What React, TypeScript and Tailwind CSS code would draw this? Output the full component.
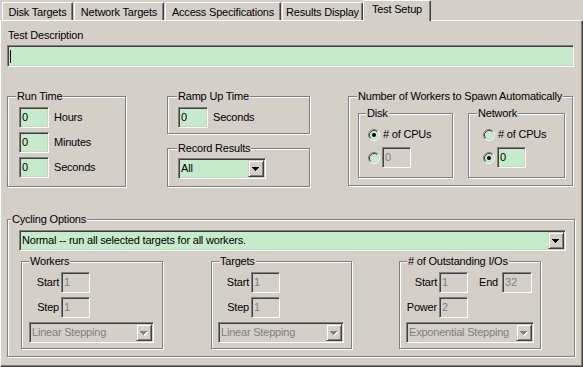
import React from 'react';

type P = { className?: string; children?: React.ReactNode };

function Sunken({ className = '', children }: P) {
  return (
    <div
      className={`flex items-center border border-t-[#808080] border-l-[#808080] border-b-white border-r-white shadow-[inset_1px_1px_0_#404040,inset_-1px_-1px_0_#d4d0c8] ${className}`}
    >
      {children}
    </div>
  );
}

function Field({ value, w, disabled }: { value: string; w: string; disabled?: boolean }) {
  return (
    <Sunken
      className={`h-[21px] shrink-0 pl-[2px] ${w} ${disabled ? 'bg-[#d4d0c8] text-[#808080]' : 'bg-[#c5ebca] text-black'}`}
    >
      {value}
    </Sunken>
  );
}

function Arrow({ disabled }: { disabled?: boolean }) {
  const c = disabled ? '#808080' : '#000000';
  return (
    <svg width="8" height="5" viewBox="0 0 8 5" className="block">
      {disabled && (
        <g fill="#ffffff">
          <rect x="1" y="1" width="7" height="1" />
          <rect x="2" y="2" width="5" height="1" />
          <rect x="3" y="3" width="3" height="1" />
          <rect x="4" y="4" width="1" height="1" />
        </g>
      )}
      <g fill={c}>
        <rect x="0" y="0" width="7" height="1" />
        <rect x="1" y="1" width="5" height="1" />
        <rect x="2" y="2" width="3" height="1" />
        <rect x="3" y="3" width="1" height="1" />
      </g>
    </svg>
  );
}

function Combo({ text, w, disabled }: { text: string; w: string; disabled?: boolean }) {
  return (
    <Sunken
      className={`h-[21px] shrink-0 pl-[2px] pr-[1px] ${w} ${disabled ? 'bg-[#d4d0c8] text-[#808080]' : 'bg-[#c5ebca] text-black'}`}
    >
      <span className="min-w-0 flex-1 truncate whitespace-nowrap">{text}</span>
      <div className="flex h-[17px] w-[16px] shrink-0 items-center justify-center border border-t-[#d4d0c8] border-l-[#d4d0c8] border-b-[#404040] border-r-[#404040] bg-[#d4d0c8] pt-[2px] shadow-[inset_1px_1px_0_#ffffff,inset_-1px_-1px_0_#808080]">
        <Arrow disabled={disabled} />
      </div>
    </Sunken>
  );
}

function Radio({ checked }: { checked?: boolean }) {
  return (
    <svg width="12" height="12" viewBox="0 0 12 12" className="block shrink-0">
      <circle cx="6" cy="6" r="4.5" fill="#c5ebca" />
      <path d="M2.11 9.89A5.5 5.5 0 0 1 9.89 2.11" stroke="#808080" fill="none" />
      <path d="M9.89 2.11A5.5 5.5 0 0 1 2.11 9.89" stroke="#ffffff" fill="none" />
      <path d="M2.82 9.18A4.5 4.5 0 0 1 9.18 2.82" stroke="#404040" fill="none" />
      <path d="M9.18 2.82A4.5 4.5 0 0 1 2.82 9.18" stroke="#d4d0c8" fill="none" />
      {checked && <circle cx="6" cy="6" r="2" fill="#000000" />}
    </svg>
  );
}

function Group({ title, className = '', tl = 'left-[8px]', children }: P & { title: string; tl?: string }) {
  return (
    <div
      className={`relative shrink-0 border border-[#808080] shadow-[inset_1px_1px_0_#ffffff,1px_1px_0_#ffffff] ${className}`}
    >
      <span className={`absolute top-[-7px] ${tl} whitespace-nowrap bg-[#d4d0c8] px-[1px] leading-[13px]`}>
        {title}
      </span>
      {children}
    </div>
  );
}

function Tab({ children, className = '' }: P) {
  return (
    <div
      className={`flex h-[18px] shrink-0 justify-center whitespace-nowrap rounded-t-[2px] border-t border-l border-r border-t-white border-l-white border-r-[#404040] pt-[3px] shadow-[inset_-1px_0_0_#808080] ${className}`}
    >
      {children}
    </div>
  );
}

function Label({ children }: P) {
  return <span className="w-[39px] shrink-0 pr-[2px] text-right">{children}</span>;
}

export default function App() {
  return (
    <div className="h-[367px] w-[583px] overflow-hidden bg-[#d4d0c8] font-['Liberation_Sans',Arial,sans-serif] text-[11px] leading-[13px] tracking-[-0.2px] text-black">
      {/* tab strip */}
      <div className="flex h-[20px] items-end pl-[2px]">
        <Tab className="w-[71px]">Disk Targets</Tab>
        <Tab className="ml-[1px] w-[90px]">Network Targets</Tab>
        <Tab className="ml-[1px] w-[116px]">Access Specifications</Tab>
        <Tab className="ml-[1px] w-[81px]">Results Display</Tab>
        <div className="relative z-10 mb-[-1px] flex h-[21px] w-[68px] shrink-0 justify-center whitespace-nowrap rounded-t-[2px] border-t border-l border-r border-t-white border-l-white border-r-[#404040] bg-[#d4d0c8] pt-[2px] shadow-[inset_-1px_0_0_#808080]">
          Test Setup
        </div>
      </div>

      {/* panel */}
      <div className="h-[347px] border-t border-l border-r border-b border-t-white border-l-white border-r-[#404040] border-b-[#404040] pl-[6px] pt-[8px] shadow-[inset_-1px_-1px_0_#808080]">
        <div className="pl-[1px]">Test Description</div>
        <Sunken className="mt-[3px] h-[22px] w-[567px] bg-[#c5ebca] pl-[2px]">
          <div className="h-[13px] w-[1px] bg-black" />
        </Sunken>

        <div className="mt-[29px] flex items-start">
          <Group title="Run Time" className="h-[91px] w-[119px]">
            <div className="flex flex-col gap-[4px] pl-[11px] pt-[10px]">
              <div className="flex items-center">
                <Field value="0" w="w-[30px]" />
                <span className="ml-[5px]">Hours</span>
              </div>
              <div className="flex items-center">
                <Field value="0" w="w-[30px]" />
                <span className="ml-[5px]">Minutes</span>
              </div>
              <div className="flex items-center">
                <Field value="0" w="w-[30px]" />
                <span className="ml-[5px]">Seconds</span>
              </div>
            </div>
          </Group>

          <div className="ml-[41px] flex flex-col">
            <Group title="Ramp Up Time" tl="left-[9px]" className="h-[38px] w-[143px]">
              <div className="flex items-center pl-[10px] pt-[10px]">
                <Field value="0" w="w-[30px]" />
                <span className="ml-[5px]">Seconds</span>
              </div>
            </Group>
            <Group title="Record Results" tl="left-[9px]" className="mt-[14px] h-[39px] w-[143px]">
              <div className="flex pl-[10px] pt-[9px]">
                <Combo text="All" w="w-[88px]" />
              </div>
            </Group>
          </div>

          <Group title="Number of Workers to Spawn Automatically" className="ml-[38px] h-[90px] w-[225px]">
            <div className="flex pl-[9px] pt-[16px]">
              <Group title="Disk" tl="left-[7px]" className="h-[65px] w-[95px]">
                <div className="flex flex-col gap-[2px] pl-[9px] pt-[10px]">
                  <div className="flex h-[21px] items-center">
                    <Radio checked />
                    <span className="ml-[3px]"># of CPUs</span>
                  </div>
                  <div className="flex h-[21px] items-center">
                    <Radio />
                    <div className="ml-[2px]">
                      <Field value="0" w="w-[29px]" disabled />
                    </div>
                  </div>
                </div>
              </Group>
              <Group title="Network" className="ml-[15px] h-[65px] w-[97px]">
                <div className="flex flex-col gap-[2px] pl-[14px] pt-[10px]">
                  <div className="flex h-[21px] items-center">
                    <Radio />
                    <span className="ml-[3px]"># of CPUs</span>
                  </div>
                  <div className="flex h-[21px] items-center">
                    <Radio checked />
                    <div className="ml-[2px]">
                      <Field value="0" w="w-[29px]" />
                    </div>
                  </div>
                </div>
              </Group>
            </div>
          </Group>
        </div>

        <Group title="Cycling Options" tl="left-[3px]" className="mt-[32px] h-[138px] w-[568px]">
          <div className="pl-[11px] pt-[10px]">
            <Combo text="Normal -- run all selected targets for all workers." w="w-[547px]" />
            <div className="ml-[2px] mt-[10px] flex">
              <Group title="Workers" tl="left-[7px]" className="h-[88px] w-[142px]">
                <div className="flex flex-col gap-[4px] pt-[10px]">
                  <div className="flex items-center">
                    <Label>Start</Label>
                    <Field value="1" w="w-[29px]" disabled />
                  </div>
                  <div className="flex items-center">
                    <Label>Step</Label>
                    <Field value="1" w="w-[29px]" disabled />
                  </div>
                  <div className="ml-[7px] flex">
                    <Combo text="Linear Stepping" w="w-[125px]" disabled />
                  </div>
                </div>
              </Group>
              <Group title="Targets" tl="left-[7px]" className="ml-[48px] h-[88px] w-[141px]">
                <div className="flex flex-col gap-[4px] pt-[10px]">
                  <div className="flex items-center">
                    <Label>Start</Label>
                    <Field value="1" w="w-[29px]" disabled />
                  </div>
                  <div className="flex items-center">
                    <Label>Step</Label>
                    <Field value="1" w="w-[29px]" disabled />
                  </div>
                  <div className="ml-[6px] flex">
                    <Combo text="Linear Stepping" w="w-[126px]" disabled />
                  </div>
                </div>
              </Group>
              <Group title="# of Outstanding I/Os" tl="left-[7px]" className="ml-[47px] h-[88px] w-[142px]">
                <div className="flex flex-col gap-[4px] pt-[10px]">
                  <div className="flex items-center">
                    <Label>Start</Label>
                    <Field value="1" w="w-[29px]" disabled />
                    <span className="w-[34px] shrink-0 pr-[4px] text-right">End</span>
                    <Field value="32" w="w-[30px]" disabled />
                  </div>
                  <div className="flex items-center">
                    <Label>Power</Label>
                    <Field value="2" w="w-[29px]" disabled />
                  </div>
                  <div className="ml-[6px] flex">
                    <Combo text="Exponential Stepping" w="w-[128px]" disabled />
                  </div>
                </div>
              </Group>
            </div>
          </div>
        </Group>
      </div>
    </div>
  );
}
